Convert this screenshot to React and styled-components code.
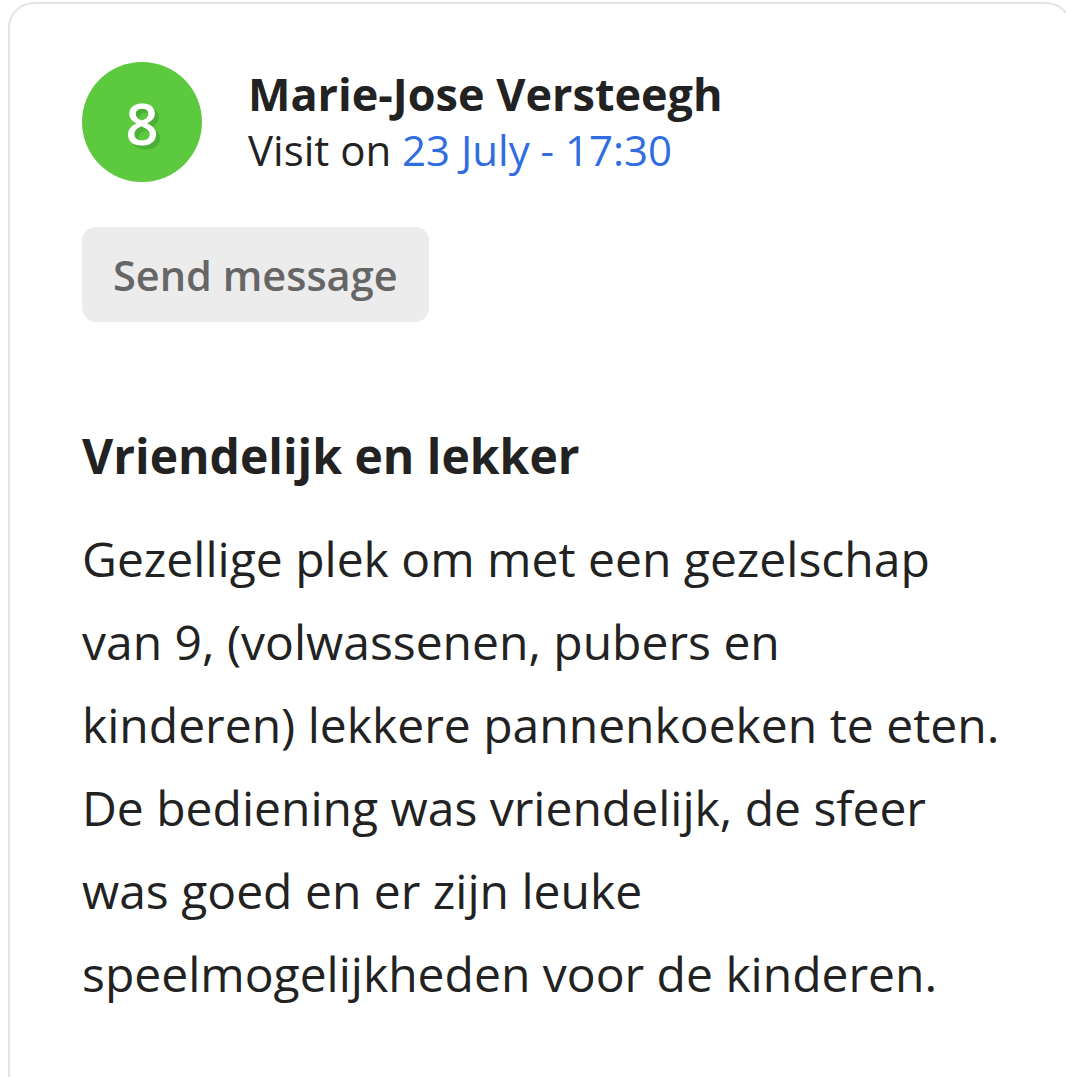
import React from 'react';
import styled, { createGlobalStyle } from 'styled-components';

const GlobalStyle = createGlobalStyle`
  body {
    margin: 0;
    background: #ffffff;
    font-family: 'Open Sans', 'Noto Sans', sans-serif;
    color: #222222;
    overflow: hidden;
  }
`;

const Card = styled.div`
  margin: 2px 0 0 8px;
  width: 1064px;
  min-height: 1120px;
  box-sizing: border-box;
  border: 2px solid #e4e4e4;
  border-radius: 26px;
  padding: 58px 70px 0 72px;
`;

const Header = styled.div`
  display: flex;
  align-items: center;
  gap: 46px;
`;

const Score = styled.div`
  width: 120px;
  height: 120px;
  border-radius: 50%;
  background: #5cc93f;
  color: #ffffff;
  display: flex;
  align-items: center;
  justify-content: center;
  font-size: 58px;
  font-weight: 600;
  text-shadow: 2px 2px 0 #4cb036, 4px 4px 0 #4cb036;
  flex-shrink: 0;
`;

const Who = styled.div`
  display: flex;
  flex-direction: column;
`;

const Name = styled.div`
  font-size: 45px;
  font-weight: 700;
  line-height: 56px;
  color: #222222;
`;

const Visit = styled.div`
  font-size: 42px;
  line-height: 56px;
  color: #222222;
`;

const DateLink = styled.span`
  color: #2f6de1;
`;

const MessageButton = styled.button`
  margin-top: 45px;
  height: 95px;
  padding: 0 31px;
  border: none;
  border-radius: 14px;
  background: #ececec;
  color: #666666;
  font-family: inherit;
  font-size: 41.5px;
  font-weight: 600;
`;

const Title = styled.h2`
  margin: 104px 0 0 0;
  font-size: 48px;
  font-weight: 700;
  line-height: 60px;
`;

const Body = styled.p`
  margin: 31px 0 0 0;
  font-size: 48px;
  line-height: 83px;
`;

export default function App() {
  return (
    <>
      <GlobalStyle />
      <Card>
        <Header>
          <Score>8</Score>
          <Who>
            <Name>Marie-Jose Versteegh</Name>
            <Visit>
              Visit on <DateLink>23 July - 17:30</DateLink>
            </Visit>
          </Who>
        </Header>
        <MessageButton>Send message</MessageButton>
        <Title>Vriendelijk en lekker</Title>
        <Body>
          Gezellige plek om met een gezelschap van 9, (volwassenen, pubers en
          kinderen) lekkere pannenkoeken te eten. De bediening was vriendelijk,
          de sfeer was goed en er zijn leuke speelmogelijkheden voor de kinderen.
        </Body>
      </Card>
    </>
  );
}
